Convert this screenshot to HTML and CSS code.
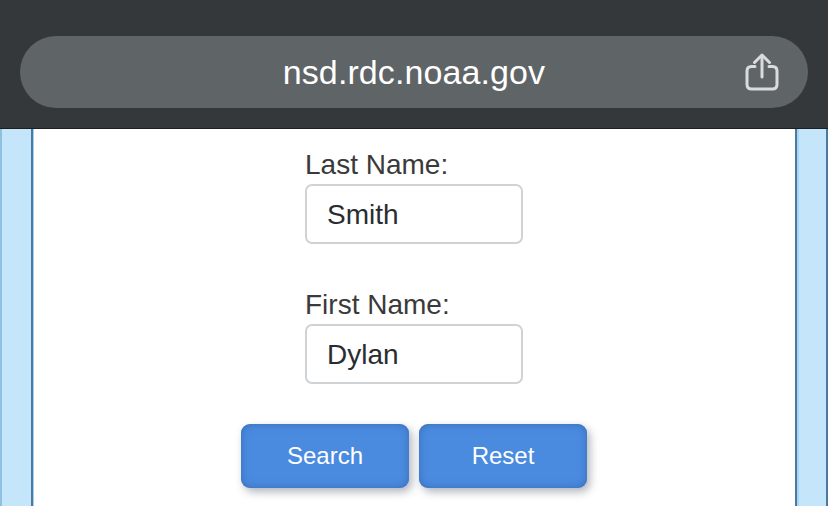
FILE: index.html
```html
<!DOCTYPE html>
<html lang="en">
<head>
  <meta charset="UTF-8" />
  <title>nsd.rdc.noaa.gov</title>
  <link rel="stylesheet" href="styles.css">
</head>
<body>
  <header class="browser-bar">
    <div class="address-pill">
      <span class="address-text">nsd.rdc.noaa.gov</span>
      <svg class="share-icon" width="34" height="38" viewBox="0 0 34 38" fill="none" stroke="#d9dbdc" stroke-width="3" stroke-linecap="round" stroke-linejoin="round">
        <path d="M10 13.500H6.500C3.500 13.500 2 15 2 18V31.500C2 34.500 3.500 36 6.500 36H27.500C30.500 36 32 34.500 32 31.500V18C32 15 30.500 13.500 27.500 13.500H24" />
        <path d="M17 24V3" />
        <path d="M9.500 9.500L17 2L24.500 9.500" />
      </svg>
    </div>
  </header>
  <div class="page">
    <div class="side side-left"></div>
    <main class="content">
      <form class="search-form">
        <div class="field">
          <label for="lastName">Last Name:</label>
          <input type="text" id="lastName" value="Smith" />
        </div>
        <div class="field">
          <label for="firstName">First Name:</label>
          <input type="text" id="firstName" value="Dylan" />
        </div>
        <div class="buttons">
          <button type="button">Search</button>
          <button type="button">Reset</button>
        </div>
      </form>
    </main>
    <div class="side side-right"></div>
  </div>
</body>
</html>
```

FILE: styles.css
```css
* { box-sizing: border-box; }
html, body {
  height: 100%;
}
body {
  margin: 0;
  font-family: "Liberation Sans", Arial, sans-serif;
  background-color: #fff;
  overflow: hidden;
  display: flex;
  flex-direction: column;
}
.browser-bar {
  height: 129px;
  flex: none;
  padding: 36px 20px 0;
  background-color: #34383b;
  border-bottom: 1px solid #1c1e20;
}
.address-pill {
  height: 72px;
  border-radius: 36px;
  background-color: #5f6467;
  display: flex;
  align-items: center;
  justify-content: center;
  position: relative;
}
.address-text {
  color: #fff;
  font-size: 34px;
  letter-spacing: 0.1px;
}
.share-icon {
  position: absolute;
  right: 29px;
  top: 17px;
}
.page {
  flex: 1;
  display: flex;
}
.side {
  flex: none;
  background-color: #c5e5fb;
}
.side-left {
  width: 34px;
  border-left: 2px solid #8fc0e0;
  border-right: 1px solid #9fd3f5;
  box-shadow: inset -2px 0 0 #4d7a9c;
}
.side-right {
  width: 33px;
  border-left: 2px solid #4d7a9c;
  border-right: 2px solid #4d7a9c;
  box-shadow: inset 2px 0 0 #a5d6f7;
}
.content {
  flex: 1;
  display: flex;
  justify-content: center;
  padding-right: 1px;
}
.search-form {
  width: 346px;
  padding-top: 19px;
  display: flex;
  flex-direction: column;
  align-items: center;
}
.field {
  width: 218px;
}
.field + .field {
  margin-top: 44px;
}
.field label {
  display: block;
  font-size: 28px;
  line-height: 36px;
  color: #3a3a3a;
  position: relative;
  top: -1px;
}
.field input {
  display: block;
  width: 218px;
  height: 60px;
  padding: 2px 20px 0;
  font-family: inherit;
  font-size: 28px;
  color: #2a2d30;
  background: #fff;
  border: 2px solid #d0d3d6;
  border-radius: 7px;
  outline: none;
}
.buttons {
  display: flex;
  gap: 10px;
  margin-top: 40px;
}
.buttons button {
  width: 168px;
  height: 64px;
  font-family: inherit;
  font-size: 24px;
  color: #fff;
  background-color: #4a8be0;
  border: 0;
  border-radius: 9px;
  box-shadow: inset 0 0 9px #3a6db5, 3px 4px 8px rgba(60, 70, 90, 0.4);
}
```
